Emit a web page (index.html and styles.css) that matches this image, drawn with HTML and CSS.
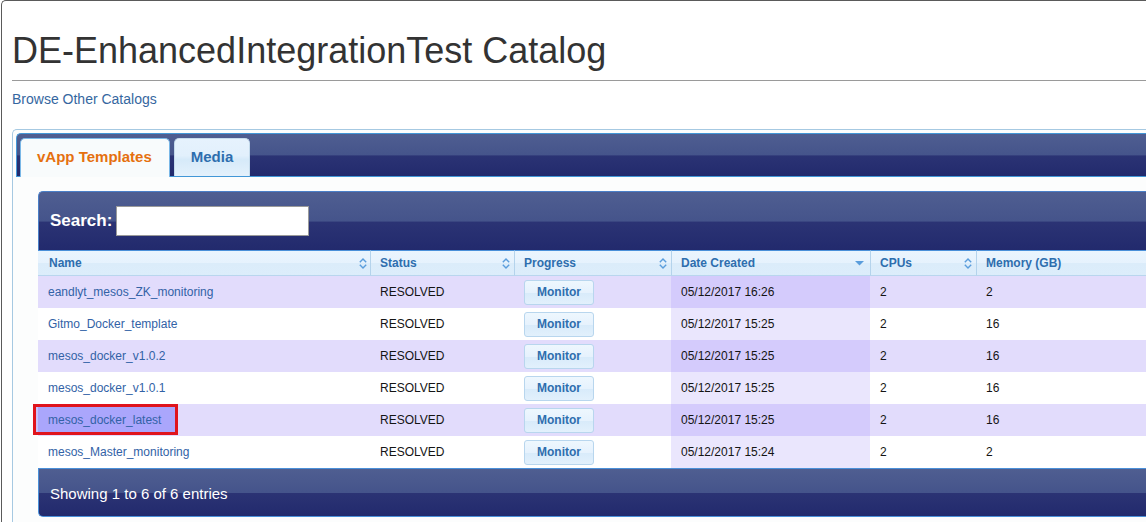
FILE: index.html
```html
<!DOCTYPE html>
<html>
<head>
<meta charset="utf-8">
<title>DE-EnhancedIntegrationTest Catalog</title>
<link rel="stylesheet" href="styles.css">
</head>
<body>
<div class="frame">
  <h1 class="title">DE-EnhancedIntegrationTest Catalog</h1>
  <hr class="rule">
  <a class="browse" href="#">Browse Other Catalogs</a>

  <div class="tabs">
    <ul class="tabs-nav">
      <li class="tab active">vApp Templates</li>
      <li class="tab">Media</li>
    </ul>
    <div class="panel">
      <div class="dt">
        <div class="dt-top">
          <label class="search-label">Search:</label>
          <input class="search-input" type="text">
        </div>
        <table class="grid">
          <colgroup>
            <col class="c-name"><col class="c-status"><col class="c-progress"><col class="c-date"><col class="c-cpu"><col class="c-mem">
          </colgroup>
          <thead>
            <tr>
              <th><div class="th-in"><span>Name</span><svg class="sort" width="8" height="11" viewBox="0 0 8 11"><polyline points="0.8,4.2 4,1 7.2,4.2"/><polyline points="0.8,6.8 4,10 7.2,6.8"/></svg></div></th>
              <th><div class="th-in"><span>Status</span><svg class="sort" width="8" height="11" viewBox="0 0 8 11"><polyline points="0.8,4.2 4,1 7.2,4.2"/><polyline points="0.8,6.8 4,10 7.2,6.8"/></svg></div></th>
              <th><div class="th-in"><span>Progress</span><svg class="sort" width="8" height="11" viewBox="0 0 8 11"><polyline points="0.8,4.2 4,1 7.2,4.2"/><polyline points="0.8,6.8 4,10 7.2,6.8"/></svg></div></th>
              <th><div class="th-in"><span>Date Created</span><svg class="sort-desc" width="9" height="5" viewBox="0 0 9 5"><polygon points="0,0 9,0 4.5,4.5"/></svg></div></th>
              <th><div class="th-in"><span>CPUs</span><svg class="sort" width="8" height="11" viewBox="0 0 8 11"><polyline points="0.8,4.2 4,1 7.2,4.2"/><polyline points="0.8,6.8 4,10 7.2,6.8"/></svg></div></th>
              <th><div class="th-in"><span>Memory (GB)</span></div></th>
            </tr>
          </thead>
          <tbody>
            <tr class="odd">
              <td><a class="name" href="#">eandlyt_mesos_ZK_monitoring</a></td>
              <td>RESOLVED</td>
              <td><button class="monitor">Monitor</button></td>
              <td class="sorted">05/12/2017 16:26</td>
              <td>2</td>
              <td>2</td>
            </tr>
            <tr class="even">
              <td><a class="name" href="#">Gitmo_Docker_template</a></td>
              <td>RESOLVED</td>
              <td><button class="monitor">Monitor</button></td>
              <td class="sorted">05/12/2017 15:25</td>
              <td>2</td>
              <td>16</td>
            </tr>
            <tr class="odd">
              <td><a class="name" href="#">mesos_docker_v1.0.2</a></td>
              <td>RESOLVED</td>
              <td><button class="monitor">Monitor</button></td>
              <td class="sorted">05/12/2017 15:25</td>
              <td>2</td>
              <td>16</td>
            </tr>
            <tr class="even">
              <td><a class="name" href="#">mesos_docker_v1.0.1</a></td>
              <td>RESOLVED</td>
              <td><button class="monitor">Monitor</button></td>
              <td class="sorted">05/12/2017 15:25</td>
              <td>2</td>
              <td>16</td>
            </tr>
            <tr class="odd">
              <td class="marked"><span class="mark"></span><a class="name" href="#">mesos_docker_latest</a></td>
              <td>RESOLVED</td>
              <td><button class="monitor">Monitor</button></td>
              <td class="sorted">05/12/2017 15:25</td>
              <td>2</td>
              <td>16</td>
            </tr>
            <tr class="even">
              <td><a class="name" href="#">mesos_Master_monitoring</a></td>
              <td>RESOLVED</td>
              <td><button class="monitor">Monitor</button></td>
              <td class="sorted">05/12/2017 15:24</td>
              <td>2</td>
              <td>2</td>
            </tr>
          </tbody>
        </table>
        <div class="dt-foot">Showing 1 to 6 of 6 entries</div>
      </div>
    </div>
  </div>
</div>
</body>
</html>
```

FILE: styles.css
```css
html, body {
  margin: 0;
  padding: 0;
  background: #ffffff;
  overflow: hidden;
}

body {
  font-family: "Liberation Sans", Arial, sans-serif;
  color: #333333;
}

.frame {
  width: 1260px;
  margin-left: 1px;
  border-top: 1px solid #5a5a5a;
  border-left: 1px solid #5a5a5a;
  border-top-left-radius: 5px;
  padding: 0 0 0 10px;
  box-sizing: border-box;
  height: 540px;
}

.title {
  margin: 30px 0 9px 0;
  font-size: 36px;
  font-weight: normal;
  line-height: 40px;
  color: #333333;
}

.rule {
  margin: 0;
  border: 0;
  border-top: 1px solid #9a9a9a;
  height: 0;
}

.browse {
  display: block;
  margin-top: 8px;
  font-size: 14px;
  line-height: 20px;
  color: #35679f;
  text-decoration: none;
}

.tabs {
  margin-top: 20px;
  border: 1px solid #a6c9e2;
  border-right: 0;
  border-top-left-radius: 5px;
  padding: 3px 0 3px 3px;
  background: #fcfdfd;
  height: 420px;
}

.tabs-nav {
  list-style: none;
  margin: 0;
  padding: 4px 0 0 3px;
  display: flex;
  gap: 4px;
  border: 1px solid #4297d7;
  border-right: 0;
  border-top-left-radius: 5px;
  background: linear-gradient(to bottom, #4f5e91 0%, #45548b 50%, #2b3374 52%, #222a6d 100%);
}

.tab {
  margin-bottom: -1px;
  height: 37px;
  line-height: 36px;
  padding: 0 16px;
  font-size: 15px;
  font-weight: bold;
  color: #2e6eae;
  border: 1px solid #c5dbec;
  border-bottom: 0;
  border-radius: 5px 5px 0 0;
  background: linear-gradient(to bottom, #e6f2fd 0%, #e2f0fc 45%, #d6eaf9 55%, #e4f1fc 100%);
}

.tab.active {
  height: 38px;
  color: #e5700f;
  border-color: #79b7e7;
  background: #f8fbfc;
  padding-right: 17px;
}

.panel {
  padding: 14px 0 0 22px;
}

.dt-top {
  height: 58px;
  border: 1px solid #4a7fc8;
  border-bottom: 0;
  border-right: 0;
  border-top-left-radius: 5px;
  background: linear-gradient(to bottom, #4f5e91 0%, #45548b 50%, #2b3374 52%, #222a6d 100%);
  display: flex;
  align-items: center;
  padding-left: 11px;
  gap: 4px;
}

.search-label {
  color: #ffffff;
  font-size: 17px;
  font-weight: bold;
}

.search-input {
  width: 193px;
  height: 30px;
  box-sizing: border-box;
  border: 1px solid #9a9a9a;
  background: #ffffff;
  margin: 0;
  padding: 2px 4px;
}

.grid {
  border-collapse: separate;
  border-spacing: 0;
  table-layout: fixed;
  width: 1158px;
  font-size: 12px;
}

.c-name { width: 332px; }
.c-status { width: 144px; }
.c-progress { width: 157px; }
.c-date { width: 199px; }
.c-cpu { width: 106px; }
.c-mem { width: 220px; }

.grid th {
  height: 26px;
  padding: 0 4px 0 9px;
  text-align: left;
  font-weight: bold;
  color: #2e6eae;
  border-top: 1px solid #4a90d9;
  border-bottom: 1px solid #b9d6ee;
  border-left: 1px solid #b4d3ec;
  background: linear-gradient(to bottom, #eaf5fe 0%, #e6f2fd 50%, #dbecfa 52%, #dcedfb 100%);
  box-sizing: border-box;
}

.grid th:first-child {
  border-left: 0;
  padding: 0 3px 0 11px;
}

.th-in {
  display: flex;
  align-items: center;
  justify-content: space-between;
}

.sort polyline {
  fill: none;
  stroke: #5a9ddc;
  stroke-width: 1.4;
}

.sort-desc {
  margin-right: 2px;
}

.sort-desc polygon {
  fill: #5a9ddc;
}

.grid td {
  height: 32px;
  padding: 0 10px;
  box-sizing: border-box;
  color: #141414;
  vertical-align: middle;
  white-space: nowrap;
}

.grid tr.odd td { background: #e2dcfc; }
.grid tr.even td { background: #ffffff; }
.grid tr.odd td.sorted { background: #d4cbfc; }
.grid tr.even td.sorted { background: #eae6fd; }

.name {
  color: #3262a6;
  text-decoration: none;
  position: relative;
}

.marked {
  position: relative;
}

.mark {
  position: absolute;
  left: -5px;
  top: 0;
  width: 145px;
  height: 31px;
  box-sizing: border-box;
  border: 3px solid #e0141c;
  background: #aaa6fc;
  box-shadow: inset 2px 0 0 #c7c3fd;
}

.monitor {
  width: 70px;
  height: 25px;
  padding: 0;
  font-family: "Liberation Sans", Arial, sans-serif;
  font-size: 12px;
  font-weight: bold;
  color: #2e6eae;
  border: 1px solid #b8d6ee;
  border-radius: 3px;
  background: linear-gradient(to bottom, #eef7fe 0%, #e6f2fd 50%, #d8ebfa 52%, #e2f0fc 100%);
}

.dt-foot {
  height: 45px;
  border: 1px solid #4a90d9;
  border-right: 0;
  border-bottom-left-radius: 5px;
  background: linear-gradient(to bottom, #4f5e91 0%, #45548b 50%, #2b3374 52%, #222a6d 100%);
  color: #ffffff;
  font-size: 15px;
  display: flex;
  align-items: center;
  padding: 2px 0 0 11px;
  box-sizing: content-box;
}
```
